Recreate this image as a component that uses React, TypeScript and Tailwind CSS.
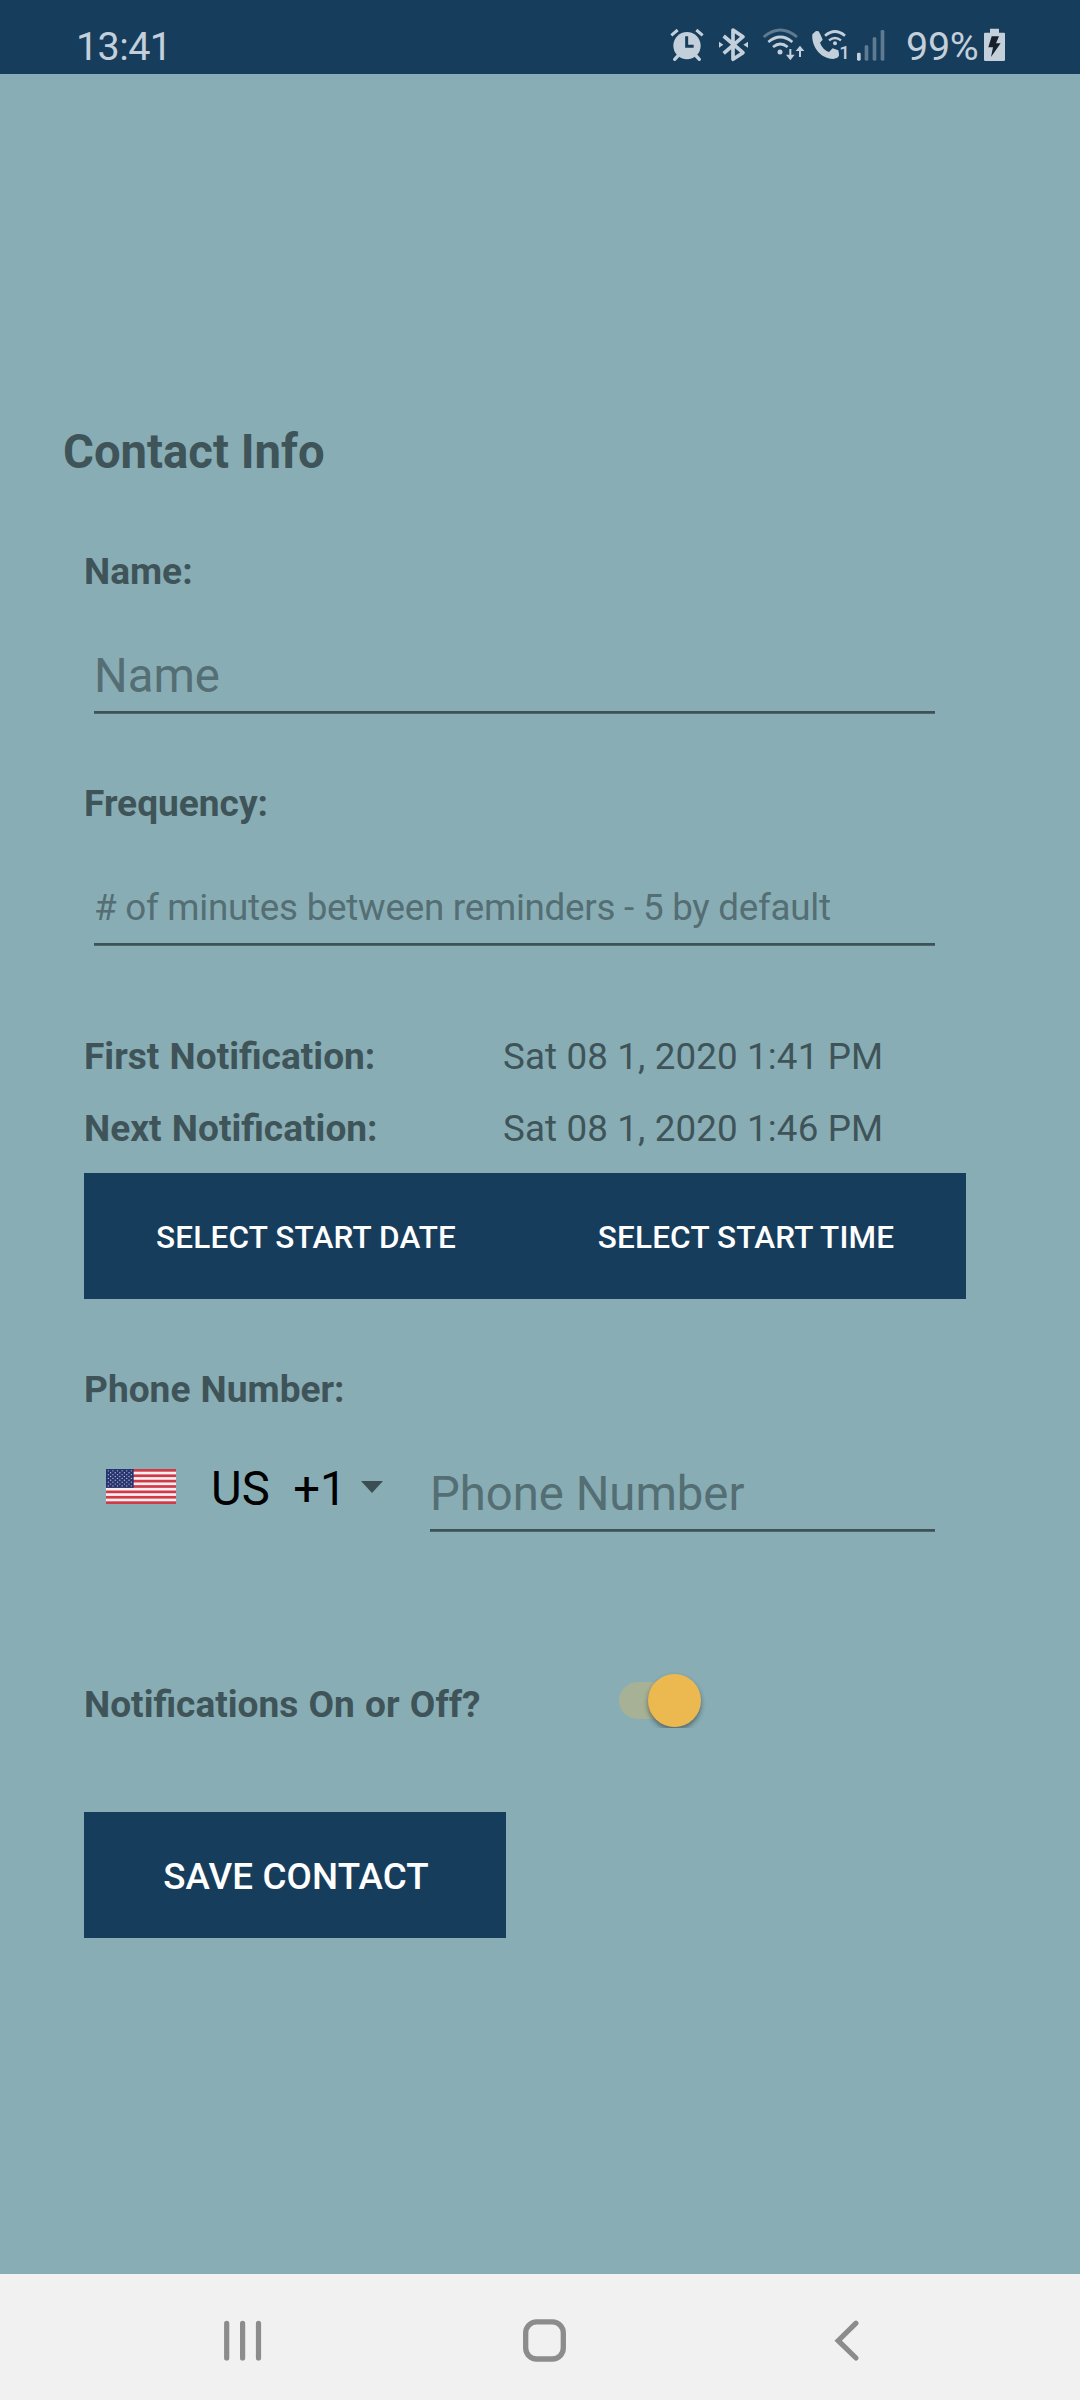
import React from "react";

function AlarmIcon() {
  return (
    <svg className="h-[36px] w-[34px]" viewBox="90 78 102 108" fill="none">
      <circle cx="141" cy="137" r="41" fill="#c3cfda" />
      <path d="M94 106L113 90M188 106L169 90" stroke="#c3cfda" strokeWidth="9" />
      <path d="M116 165L104 178M166 165L178 178" stroke="#c3cfda" strokeWidth="10" strokeLinecap="round" />
      <path d="M140 109V139H161" stroke="#173d5c" strokeWidth="9" />
    </svg>
  );
}

function BluetoothIcon() {
  return (
    <svg className="h-[36px] w-[31px]" viewBox="234 78 93 108">
      <path
        d="M251 108L309 158L279 178V90L309 110L251 160"
        fill="none"
        stroke="#c3cfda"
        strokeWidth="11"
        strokeLinejoin="round"
      />
      <path d="M237 125L250 134L237 143ZM324 125L310 134L324 143Z" fill="#c3cfda" />
    </svg>
  );
}

function WifiIcon() {
  return (
    <svg className="h-[36px] w-[43px]" viewBox="366 78 129 108" fill="none" strokeLinecap="butt">
      <path d="M371 111Q421 69 471 111" stroke="#5f7b92" strokeWidth="8" />
      <path d="M385 126Q421 96 457 126" stroke="#c3cfda" strokeWidth="8" />
      <path d="M399 141Q421 123 443 141" stroke="#c3cfda" strokeWidth="8" />
      <circle cx="420" cy="156" r="7.5" fill="#c3cfda" />
      <path d="M451 147V172M480 171V146" stroke="#c3cfda" strokeWidth="6" />
      <path d="M438 164H464L451 181ZM467 153H493L480 137Z" fill="#c3cfda" />
    </svg>
  );
}

function WifiCallIcon() {
  return (
    <svg className="h-[36px] w-[41px]" viewBox="513 78 123 108" fill="none">
      <path
        d="M528 93L517 103C514 138 539 176 580 177L592 173Q599 169 597 162L595 151L578 145L567 156Q548 149 540 128L548 119Q543 106 536 94Z"
        fill="#c3cfda"
      />
      <path d="M555 107Q585 82 615 107" stroke="#c3cfda" strokeWidth="8" />
      <path d="M567 121Q585 107 603 121" stroke="#c3cfda" strokeWidth="7" />
      <circle cx="585" cy="130" r="6" fill="#c3cfda" />
      <text x="598" y="177" fill="#c3cfda" fontFamily="Roboto, sans-serif" fontSize="56" fontWeight="500">
        1
      </text>
    </svg>
  );
}

function SignalIcon() {
  return (
    <svg className="h-[36px] w-[30px]" viewBox="648 78 90 108">
      <rect x="651" y="158" width="11" height="24" rx="4" fill="#c3cfda" />
      <rect x="674" y="136" width="11" height="46" rx="4" fill="#5f7b92" />
      <rect x="698" y="112" width="11" height="70" rx="4" fill="#5f7b92" />
      <rect x="722" y="90" width="11" height="92" rx="4" fill="#5f7b92" />
    </svg>
  );
}

function BatteryIcon() {
  return (
    <svg className="h-[36px] w-[23px]" viewBox="1029 78 69 108">
      <path d="M1050 86H1077V98H1092Q1095 98 1095 101V179Q1095 183 1091 183H1036Q1032 183 1032 179V101Q1032 98 1035 98H1050Z" fill="#c3cfda" />
      <path d="M1055 109H1077L1068 130H1082L1053 171L1059 142H1045Z" fill="#161f2b" />
    </svg>
  );
}

function StatusBar() {
  return (
    <header className="flex h-[74px] items-start bg-[#173d5c] text-[39.5px] leading-[48px] text-[#c3cfda]">
      <span className="mt-[23px] ml-[76px] w-[594px] tracking-[-0.6px]">13:41</span>
      <div className="mt-[26px] flex">
        <AlarmIcon />
        <div className="ml-[14px]"><BluetoothIcon /></div>
        <div className="ml-[13px]"><WifiIcon /></div>
        <div className="ml-[6px]"><WifiCallIcon /></div>
        <div className="ml-[4px]"><SignalIcon /></div>
      </div>
      <span className="mt-[23px] ml-[20px] w-[77px] tracking-[-0.3px] whitespace-nowrap">99%</span>
      <div className="mt-[26px]"><BatteryIcon /></div>
    </header>
  );
}

const STAR_ROWS = [0, 1, 2, 3, 4, 5, 6, 7, 8];

function UsFlag() {
  return (
    <svg className="h-[35px] w-[70px]" viewBox="0 0 210 105">
      <rect width="210" height="105" fill="#f7eff2" />
      {[0, 1, 2, 3, 4, 5, 6].map((i) => (
        <rect key={i} y={i * 16.15} width="210" height="8.08" fill="#d03a47" />
      ))}
      <rect width="83" height="56.5" fill="#26346f" />
      {STAR_ROWS.map((r) =>
        (r % 2 ? [0, 1, 2, 3, 4] : [0, 1, 2, 3, 4, 5]).map((c) => (
          <circle key={`${r}-${c}`} cx={7 + c * 13.8 + (r % 2 ? 6.9 : 0)} cy={5.6 + r * 5.65} r="2" fill="#b9bfd8" />
        )),
      )}
    </svg>
  );
}

function Underline() {
  return <div className="h-[3px] border-b border-[#4e666b] bg-[#3d5358]" />;
}

function Label({ children }: { children: React.ReactNode }) {
  return (
    <div className="text-[37.1px] leading-[43px] font-bold whitespace-nowrap [word-spacing:1px]">{children}</div>
  );
}

function NotificationRow({ label, value }: { label: string; value: string }) {
  return (
    <div className="flex">
      <div className="w-[419px]"><Label>{label}</Label></div>
      <div className="text-[36.75px] leading-[43px] tracking-[0.13px] whitespace-nowrap">{value}</div>
    </div>
  );
}

function Toggle() {
  return (
    <div className="relative h-[64px] w-[100px] overflow-hidden">
      <div className="absolute top-[18px] left-[9px] h-[37px] w-[74px] rounded-full bg-[#a6b195]" />
      <div className="absolute top-[10px] left-[38px] size-[53px] rounded-full bg-[#ecb950] shadow-[0_3px_5px_rgba(0,0,0,0.4)]" />
    </div>
  );
}

function NavBar() {
  return (
    <nav className="flex h-[126px] items-start bg-[#f1f1f1] pt-[44px] pl-[222px]">
      <svg className="h-[46px] w-[42px]" viewBox="0 0 42 46" stroke="#8c8c8c" strokeWidth="5.2" strokeLinecap="round">
        <path d="M4.7 5.3V40M20.6 5.3V40M36.5 5.3V40" />
      </svg>
      <svg className="ml-[256px] h-[46px] w-[50px]" viewBox="0 0 50 46" fill="none" stroke="#8c8c8c" strokeWidth="5.3">
        <rect x="5.7" y="3.8" width="37.6" height="37.2" rx="11" />
      </svg>
      <svg
        className="ml-[260px] h-[46px] w-[34px]"
        viewBox="0 0 34 46"
        fill="none"
        stroke="#8c8c8c"
        strokeWidth="5.2"
        strokeLinecap="round"
      >
        <path d="M26 5.2L8.2 22.7L26 40" />
      </svg>
    </nav>
  );
}

export default function App() {
  return (
    <div className="flex h-[2400px] w-[1080px] flex-col bg-[#88adb5] font-[Roboto,sans-serif] text-[#3f5458]">
      <StatusBar />
      <main className="flex grow flex-col pt-[350px] pl-[84px]">
        <h1 className="-ml-[21px] text-[47.25px] leading-[56px] font-bold">Contact Info</h1>

        <div className="mt-[70px]"><Label>Name:</Label></div>
        <div className="mt-[55px] ml-[10px] w-[841px]">
          <div className="mb-[7px] text-[47.25px] leading-[56px] text-[#546e73]">Name</div>
          <Underline />
        </div>

        <div className="mt-[68px]"><Label>Frequency:</Label></div>
        <div className="mt-[61px] ml-[10px] w-[841px]">
          <div className="mb-[14px] text-[36.75px] leading-[43px] tracking-[-0.25px] text-[#546e73]">
            # of minutes between reminders - 5 by default
          </div>
          <Underline />
        </div>

        <div className="mt-[89px] flex flex-col gap-[29px]">
          <NotificationRow label="First Notification:" value="Sat 08 1, 2020 1:41 PM" />
          <NotificationRow label="Next Notification:" value="Sat 08 1, 2020 1:46 PM" />
        </div>

        <div className="mt-[23px] grid h-[126px] w-[882px] grid-cols-2 bg-[#173d5c] pt-[3px] pl-[2px] text-[31.5px] font-medium tracking-[0.17px] text-white">
          <button>SELECT START DATE</button>
          <button>SELECT START TIME</button>
        </div>

        <div className="mt-[69px]"><Label>Phone Number:</Label></div>
        <div className="mt-[50px] flex h-[71px] items-start">
          <div className="mt-[8px] ml-[22px]"><UsFlag /></div>
          <div className="ml-[35px] w-[132px] text-[47.25px] leading-[56px] whitespace-pre text-black">US  +1</div>
          <svg className="mt-[20px] ml-[18px] h-[12px] w-[22px]" viewBox="0 0 22 12">
            <path d="M0 0H22L11 12Z" fill="#3a4f53" />
          </svg>
          <div className="mt-[5px] ml-auto mr-[145px] w-[505px]">
            <div className="mb-[7px] text-[47.25px] leading-[56px] text-[#546e73]">Phone Number</div>
            <Underline />
          </div>
        </div>

        <div className="mt-[132px] flex h-[64px]">
          <div className="mt-[19px] w-[526px]"><Label>Notifications On or Off?</Label></div>
          <Toggle />
        </div>

        <button className="mt-[84px] h-[126px] w-[422px] bg-[#173d5c] pt-[3px] pl-[2px] text-[36.75px] font-medium tracking-[0.12px] text-white">
          SAVE CONTACT
        </button>
      </main>
      <NavBar />
    </div>
  );
}
